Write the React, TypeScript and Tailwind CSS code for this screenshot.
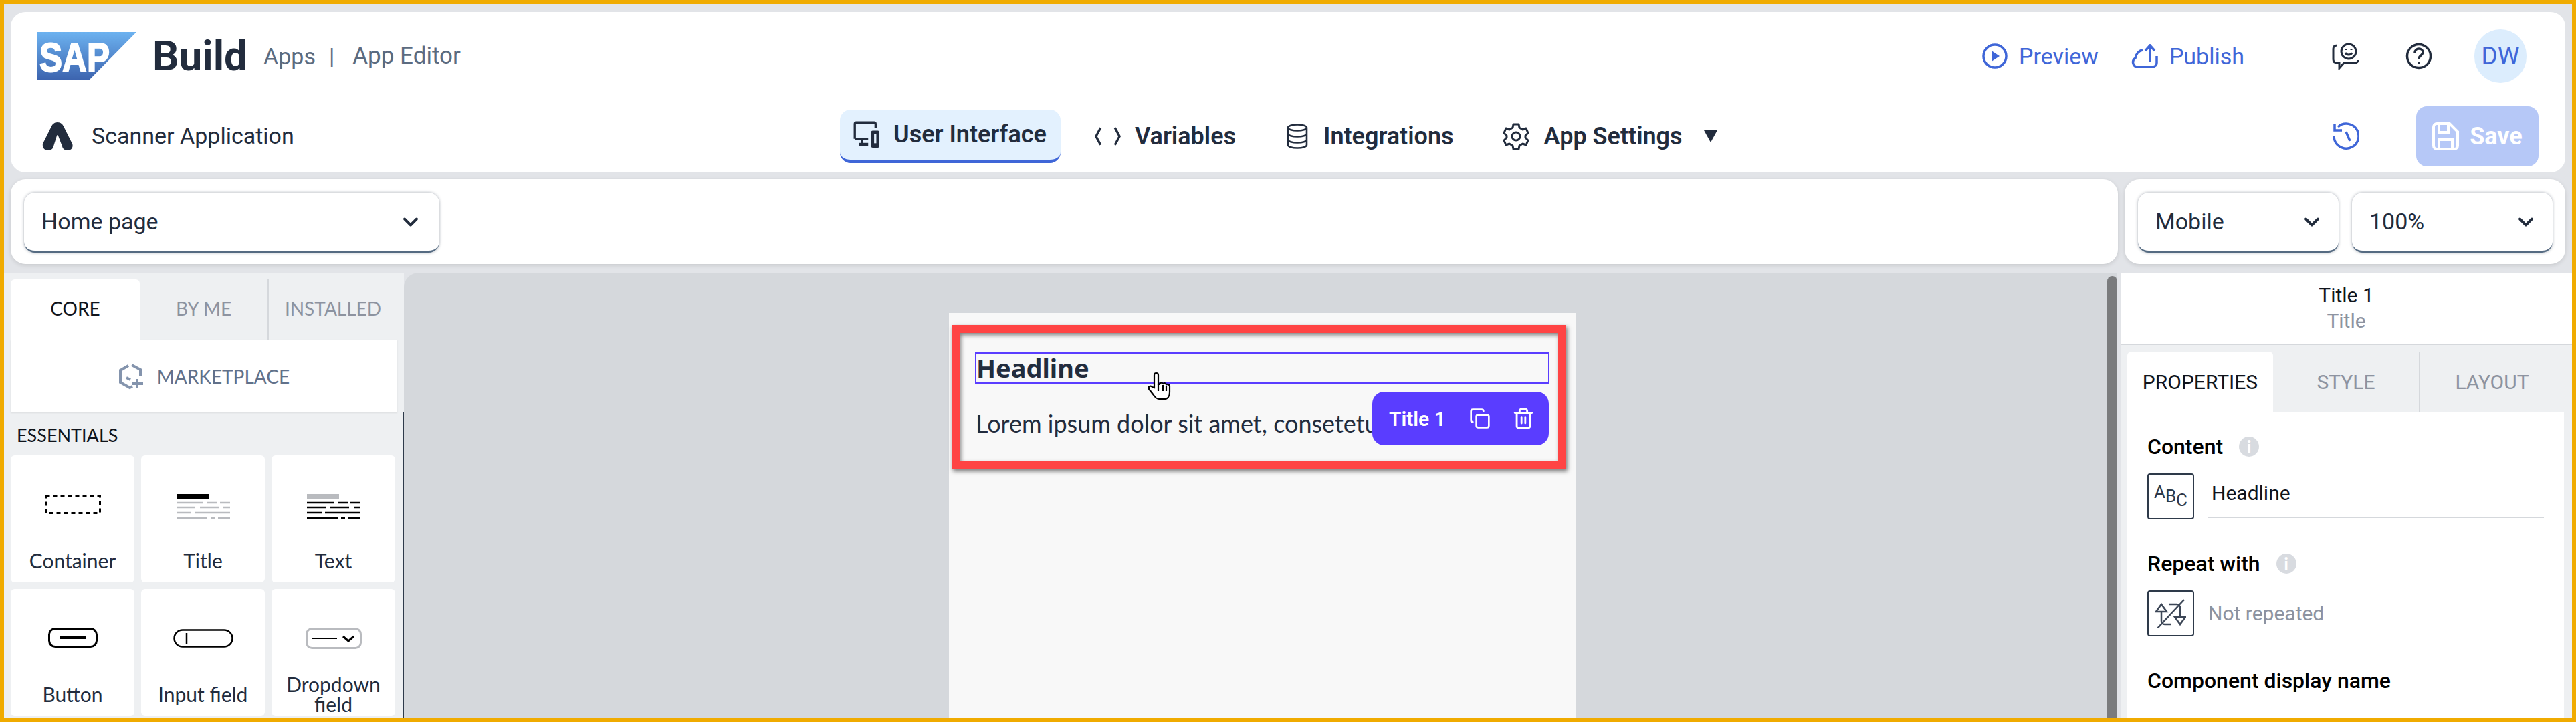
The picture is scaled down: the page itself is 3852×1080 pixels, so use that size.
import { ChevronDown, Copy, Trash2 } from "lucide-react";

const plex = "font-['Roboto',sans-serif]";
const brand = "font-['Lato',sans-serif]";

const SapLogo = () => (
  <svg width="148" height="72" viewBox="0 0 148 72">
    <defs>
      <linearGradient id="sapfill" x1="0" y1="0" x2="0" y2="1">
        <stop offset="0" stopColor="#6cb2f0" />
        <stop offset="1" stopColor="#3c63ae" />
      </linearGradient>
    </defs>
    <polygon points="0,0 148,0 77,72 0,72" fill="url(#sapfill)" />
    <text x="3" y="59" fill="#fff" stroke="#fff" strokeWidth="2" fontFamily="Liberation Sans" fontWeight="700" fontSize="61" textLength="105" lengthAdjust="spacingAndGlyphs">
      SAP
    </text>
  </svg>
);

const AppLogo = () => (
  <svg width="48" height="42" viewBox="0 0 48 42" fill="#222c3d">
    <path d="M24 0c5 0 8 3 10 8l12 24c2 5-1 10-7 10-4 0-7-2-8-6l-6-16c-.5-1.500-1.500-1.500-2 0l-5 16c-1 4-4 6-8 6-6 0-9-5-8-10L14 8c2-5 5-8 10-8z" />
  </svg>
);

const Select = ({ label, className }: { label: string; className: string }) => (
  <div className={`${className} h-[90px] flex items-center justify-between bg-white rounded-[16px] border-b-[3px] border-b-[#556b82] shadow-[0_0_4px_rgba(60,70,90,0.45)]`}>
    <span className={`${plex} text-[34px] text-[#222c3d]`}>{label}</span>
    <ChevronDown size={36} strokeWidth={2.6} className="text-[#222c3d]" />
  </div>
);

const NavIcon = ({ kind }: { kind: string }) => {
  if (kind === "ui")
    return (
      <svg width="40" height="40" viewBox="0 0 36 36" fill="none" stroke="#222c3d" strokeWidth="3">
        <path d="M2 24V4a2 2 0 0 1 2-2h24a2 2 0 0 1 2 2v6" />
        <path d="M2 24h18M12 25v6" />
        <path d="M8 31.500h12" strokeWidth="4" />
        <rect x="24" y="13" width="11" height="23" rx="2" fill="#222c3d" stroke="none" />
        <rect x="28" y="18" width="3" height="12" fill="#e3f1fe" stroke="none" />
      </svg>
    );
  if (kind === "code")
    return (
      <svg width="41" height="30" viewBox="0 0 42 30" fill="none" stroke="#222c3d" strokeWidth="3.500">
        <path d="M10 2 3 15l7 13M32 2l7 13-7 13" />
      </svg>
    );
  if (kind === "db")
    return (
      <svg width="32" height="38" viewBox="0 0 32 38" fill="none" stroke="#222c3d" strokeWidth="2.600">
        <ellipse cx="16" cy="6" rx="14" ry="4.500" />
        <path d="M2 6v26c0 2.500 6 4.500 14 4.500S30 34.500 30 32V6" />
        <path d="M2 15c0 2.500 6 4.500 14 4.500S30 17.500 30 15M2 24c0 2.500 6 4.500 14 4.500S30 26.500 30 24" />
      </svg>
    );
  return (
    <svg width="38" height="40" viewBox="0 0 38 40" fill="none" stroke="#222c3d" strokeWidth="3">
      <path d="M15 2h8l1 5 5 3 5-2 3 7-4 4v3l4 4-3 7-5-2-5 3-1 5h-8l-1-5-5-3-5 2-3-7 4-4v-3l-4-4 3-7 5 2 5-3z" strokeLinejoin="round" />
      <circle cx="19" cy="20" r="6" />
    </svg>
  );
};

const navText = `${plex} text-[36px] font-semibold text-[#222c3d] whitespace-nowrap`;

const Tile = ({ label, children }: { label: string; children: React.ReactNode }) => (
  <div className="h-[190px] bg-white rounded-[6px] flex flex-col items-center relative pt-[58px]">
    {children}
    <div className={`${brand} absolute bottom-[3px] left-0 right-0 h-[60px] flex items-center justify-center text-center text-[30px] leading-[30px] text-[#222c3d] px-[20px]`}>{label}</div>
  </div>
);

const TitleLines = ({ head, body }: { head: string; body: string }) => (
  <svg width="80" height="38" viewBox="0 0 80 38" fill="none" stroke={body} strokeWidth="2.500">
    <rect x="0" y="0" width="48" height="8" fill={head} stroke="none" />
    <path d="M0 13h40M46 13h15M65 13h15M0 20h28M35 20h28M70 20h10M0 28h22M27 28h53M0 36h46M51 36h6M62 36h18" />
  </svg>
);

const InfoDot = () => (
  <span className={`${brand} w-[30px] h-[30px] rounded-full bg-[#d8dbe0] text-white text-[24px] font-black flex items-center justify-center`}>i</span>
);

export default function App() {
  return (
    <div className="w-[3852px] h-[1080px] border-[6px] border-[#f0ab00] bg-[#e2e4e8] flex flex-col overflow-hidden">
      <div className="mx-[10px] mt-[12px] h-[240px] bg-white rounded-[22px] flex flex-col">
        <div className="h-[116px] flex items-center justify-between">
          <div className="flex items-center pl-[40px] pt-[16px]">
            <SapLogo />
            <span className={`${plex} ml-[24px] text-[62px] font-bold text-[#222c3d] leading-none`}>Build</span>
            <span className={`${plex} ml-[24px] text-[34px] text-[#5b6b80]`}>Apps</span>
            <span className={`${plex} ml-[20px] text-[34px] text-[#5b6b80]`}>|</span>
            <span className={`${plex} ml-[27px] text-[35px] text-[#5b6b80]`}>App Editor</span>
          </div>
          <div className="flex items-center pt-[16px] pr-[58px]">
            <svg width="38" height="40" viewBox="0 0 38 40" fill="none" stroke="#3f66d8" strokeWidth="3.500">
              <circle cx="19" cy="20" r="17" />
              <path d="M14 12l12 8-12 8z" fill="#3f66d8" stroke="none" />
            </svg>
            <span className={`${plex} ml-[17px] text-[34px] text-[#3f66d8]`}>Preview</span>
            <svg className="ml-[49px]" width="40" height="36" viewBox="0 0 40 36" fill="none" stroke="#3f66d8" strokeWidth="3.500">
              <path d="M16 34H9a7 7 0 0 1-3-13c1-6 5-11 11-12M24 34h7c5 0 7-3 7-6V18M28 26V3M21 10l7-8 7 8" />
              <path d="M9 34h22" />
            </svg>
            <span className={`${plex} ml-[17px] text-[34px] text-[#3f66d8]`}>Publish</span>
            <svg className="ml-[131px]" width="40" height="40" viewBox="0 0 40 40" fill="none" stroke="#222c3d" strokeWidth="3">
              <path d="M8 4C4 4 2 6 2 9v16c0 3 2 5 6 5h3v8l7-8h16c3 0 5-2 5-4" />
              <circle cx="25" cy="13" r="11" />
              <path d="M20 15c2 4 8 4 10 0" />
              <path d="M21 9v2M29 9v2" />
            </svg>
            <svg className="ml-[70px]" width="40" height="40" viewBox="0 0 40 40" fill="none" stroke="#222c3d" strokeWidth="3.500">
              <circle cx="20" cy="20" r="17.500" />
              <path d="M14 15c0-4 3-6 6-6s6 2 6 5c0 5-6 5-6 10" />
              <path d="M20 28v3" />
            </svg>
            <div className={`${plex} ml-[63px] w-[78px] h-[80px] rounded-full bg-[#dcedfd] text-[#3f66d8] text-[37px] flex items-center justify-center`}>DW</div>
          </div>
        </div>

        <div className="flex-1 flex items-center pt-[15px]">
          <div className="w-[1240px] flex items-center pl-[46px]">
            <AppLogo />
            <span className={`${plex} ml-[27px] text-[34px] text-[#222c3d]`}>Scanner Application</span>
          </div>
          <div className="flex items-center">
            <div className="w-[330px] h-[80px] rounded-[16px] bg-[#e3f1fe] border-b-[5px] border-b-[#3f66d8] flex items-center pl-[20px] gap-[20px]">
              <NavIcon kind="ui" />
              <span className={navText}>User Interface</span>
            </div>
            <div className="ml-[50px]"><NavIcon kind="code" /></div>
            <span className={`${navText} ml-[20px]`}>Variables</span>
            <div className="ml-[76px]"><NavIcon kind="db" /></div>
            <span className={`${navText} ml-[23px]`}>Integrations</span>
            <div className="ml-[74px]"><NavIcon kind="gear" /></div>
            <span className={`${navText} ml-[23px]`}>App Settings</span>
            <svg className="ml-[31px]" width="22" height="20" viewBox="0 0 22 20" fill="#222c3d">
              <path d="M1 1h20L11 19z" />
            </svg>
          </div>
          <div className="ml-auto flex items-center pr-[40px]">
            <svg width="40" height="42" viewBox="0 0 40 42" fill="none" stroke="#3f66d8" strokeWidth="3.500">
              <path d="M8 7a18.500 18.500 0 1 1-6 14" />
              <path d="M3 2v10h11M20 14l6 14" />
            </svg>
            <div className="ml-[85px] w-[183px] h-[90px] rounded-[16px] bg-[#b6c8f7] flex items-center justify-center gap-[16px]">
              <svg width="40" height="42" viewBox="0 0 40 42" fill="none" stroke="#fff" strokeWidth="4">
                <path d="M2 7a5 5 0 0 1 5-5h19l12 12v21a5 5 0 0 1-5 5H7a5 5 0 0 1-5-5z" />
                <path d="M10 2v13h14V2M10 40V26h20v14" />
              </svg>
              <span className={`${plex} text-[36px] font-bold text-white`}>Save</span>
            </div>
          </div>
        </div>
      </div>

      <div className="mx-[10px] mt-[10px] h-[127px] flex gap-[10px]">
        <div className="flex-1 bg-white rounded-[22px] shadow-[0_2px_6px_rgba(0,0,0,0.12)] pl-[20px] pt-[20px]">
          <Select label="Home page" className="w-[621px] pl-[26px] pr-[25px]" />
        </div>
        <div className="w-[659px] bg-white rounded-[22px] shadow-[0_2px_6px_rgba(0,0,0,0.12)] pl-[20px] pt-[20px] flex gap-[20px]">
          <Select label="Mobile" className="w-[300px] pl-[26px] pr-[22px]" />
          <Select label="100%" className="w-[300px] pl-[26px] pr-[22px]" />
        </div>
      </div>

      <div className="mt-[13px] flex-1 flex min-h-0">
        <div className="w-[598px] bg-[#eef0f2] flex flex-col">
          <div className="pl-[10px] pt-[10px]">
            <div className={`${brand} flex h-[90px] text-[28px] w-[578px]`}>
              <div className="w-[193px] bg-white rounded-t-[6px] flex items-center justify-center text-[#10141c] pb-[4px]">CORE</div>
              <div className="w-[193px] flex items-center justify-center text-[#8d93a0] border-r-2 border-r-[#d5d8dc] pb-[4px]">BY ME</div>
              <div className="flex-1 flex items-center justify-center text-[#8d93a0] pb-[4px]">INSTALLED</div>
            </div>
            <div className="w-[578px] h-[109px] bg-white flex items-center justify-center gap-[20px] shadow-[0_1px_2px_rgba(0,0,0,0.08)]">
              <svg width="38" height="40" viewBox="0 0 38 40" fill="none" stroke="#8494ad" strokeWidth="4">
                <path d="M15 4 3 11v18l14 8 4-2" />
                <path d="M20 3l13 7v9" />
                <path d="M12 22l6 3" />
                <path d="M28 24v14M21 31h16" />
              </svg>
              <span className={`${brand} text-[28px] text-[#61718a]`}>MARKETPLACE</span>
            </div>
          </div>
          <div className="flex-1 pl-[10px] border-r-2 border-r-[#2e3a4a]">
            <div className={`${brand} h-[64px] flex items-center pl-[9px] pt-[4px] text-[27px] text-[#10141c]`}>ESSENTIALS</div>
            <div className="grid grid-cols-[185px_185px_185px] gap-[10px]">
              <Tile label="Container">
                <svg width="84" height="28" viewBox="0 0 84 28" fill="none" stroke="#000" strokeWidth="3" strokeDasharray="6 5" className="mt-[2px]">
                  <rect x="1.500" y="1.500" width="81" height="25" />
                </svg>
              </Tile>
              <Tile label="Title">
                <TitleLines head="#000" body="#b9bbbf" />
              </Tile>
              <Tile label="Text">
                <TitleLines head="#b9bbbf" body="#000" />
              </Tile>
              <Tile label="Button">
                <svg width="74" height="30" viewBox="0 0 74 30" fill="none" stroke="#000" strokeWidth="3">
                  <rect x="1.500" y="1.500" width="71" height="27" rx="9" />
                  <path d="M18 15h38" strokeWidth="4" />
                </svg>
              </Tile>
              <Tile label="Input field">
                <svg width="90" height="28" viewBox="0 0 90 28" fill="none" stroke="#000" strokeWidth="2.500" className="mt-[2px]">
                  <rect x="1.500" y="1.500" width="87" height="25" rx="12.500" />
                  <path d="M20 6v16" />
                </svg>
              </Tile>
              <Tile label="Dropdown field">
                <svg width="84" height="32" viewBox="0 0 84 32" fill="none" stroke="#000" strokeWidth="2">
                  <rect x="1.500" y="1.500" width="81" height="29" rx="8" stroke="#b9bbbf" strokeWidth="3" />
                  <path d="M10 16h37" />
                  <path d="M56 13l8 7 8-7" strokeWidth="3" />
                </svg>
              </Tile>
            </div>
          </div>
        </div>

        <div className="flex-1 relative bg-[#d5d8dc] rounded-tl-[22px] overflow-hidden">
          <div className="ml-[815px] mt-[60px] w-[937px] h-[700px] bg-[#f8f8f8] relative">
            <div className="absolute left-[39px] top-[59px] w-[859px] h-[47px] border-2 border-[#5a3dff] flex items-center">
              <span className="font-['Noto_Sans',sans-serif] text-[38px] font-bold text-[#222c3d]">Headline</span>
            </div>
            <div className={`${brand} absolute left-[40px] top-[138px] w-[860px] text-[36px] text-[#222c3d] whitespace-nowrap overflow-hidden`}>Lorem ipsum dolor sit amet, consetetur</div>
            <div className="absolute left-[4px] top-[18px] w-[919px] h-[216px] border-[12px] border-[#ff4444] shadow-[2px_3px_6px_rgba(0,0,0,0.5),inset_2px_3px_6px_rgba(0,0,0,0.5)]" />
            <div className="absolute left-[633px] top-[118px] w-[264px] h-[80px] rounded-[18px] bg-[#5a3dff] flex items-center pl-[25px] text-white">
              <span className={`${plex} text-[30px] font-semibold`}>Title 1</span>
              <Copy size={32} strokeWidth={2} className="ml-[35px]" />
              <Trash2 size={34} strokeWidth={2} className="ml-[32px]" />
            </div>
            <svg className="absolute left-[296px] top-[88px]" width="36" height="44" viewBox="0 0 36 44" fill="#fff" stroke="#000" strokeWidth="2.200">
              <path d="M11 24V5c0-4 6-4 6 0v14l2 0c0-3 5-3 5 0 1-3 5-2 5 1 1-2 5-1 5 2v9c0 6-3 10-8 10H18c-4 0-6-3-8-6L3 26c-2-3 2-6 5-3z" />
              <path d="M17 19v10M24 20v9M29 21v8" />
            </svg>
          </div>
          <div className="absolute right-0 top-[5px] bottom-0 w-[15px] bg-[#7a7b7d] rounded-t-full" />
        </div>
        <div className="w-[5px] bg-[#e2e4e8]" />

        <div className="w-[675px] bg-white flex flex-col">
          <div className={`${plex} h-[108px] border-b-2 border-b-[#d5d8dc] flex flex-col items-center justify-center text-[30px] leading-[38px]`}>
            <span className="text-[#10141c]">Title 1</span>
            <span className="text-[#8d93a0]">Title</span>
          </div>
          <div className="flex-1 bg-[#eef0f2] pl-[10px] pr-[12px] pt-[10px] flex flex-col">
            <div className={`${plex} flex h-[90px] text-[30px]`}>
              <div className="w-[218px] bg-white rounded-t-[6px] flex items-center justify-center text-[#10141c]">PROPERTIES</div>
              <div className="w-[220px] flex items-center justify-center text-[#8d93a0] border-r-2 border-r-[#d5d8dc]">STYLE</div>
              <div className="flex-1 flex items-center justify-center text-[#8d93a0]">LAYOUT</div>
            </div>
            <div className={`${plex} flex-1 bg-white pl-[30px] pr-[30px] pt-[32px]`}>
              <div className="flex items-center gap-[24px] h-[40px]">
                <span className="text-[32px] font-medium text-[#000]">Content</span>
                <InfoDot />
              </div>
              <div className="flex mt-[20px] gap-[20px]">
                <div className="w-[70px] h-[69px] border-2 border-[#2e3a4a] rounded-[4px] flex items-center justify-center text-[26px] text-[#2e3a4a]">
                  <span className="-translate-y-[6px]">A</span><span>B</span><span className="translate-y-[6px]">C</span>
                </div>
                <div className="flex-1 h-[67px] border-b-2 border-b-[#d5d8dc] pl-[6px] text-[30px] text-[#10141c] flex items-center pb-[7px]">Headline</div>
              </div>
              <div className="flex items-center gap-[24px] h-[40px] mt-[46px]">
                <span className="text-[32px] font-medium text-[#000]">Repeat with</span>
                <InfoDot />
              </div>
              <div className="flex mt-[20px] gap-[21px]">
                <div className="w-[70px] h-[69px] border-2 border-[#2e3a4a] rounded-[4px] flex items-center justify-center">
                  <svg width="46" height="44" viewBox="0 0 46 44" fill="none" stroke="#3d4757" strokeWidth="2.500">
                    <path d="M1 19 9 8l8 11zM9 19v14c0 3 2 5 5 5h10" />
                    <path d="M45 27l-8 11-8-11zM37 27V13c0-3-2-5-5-5H20" />
                    <path d="M3 44 43 1" />
                  </svg>
                </div>
                <span className="text-[30px] text-[#8d93a0] pt-[12px]">Not repeated</span>
              </div>
              <div className="text-[32px] font-medium text-[#000] mt-[42px]">Component display name</div>
            </div>
          </div>
        </div>
      </div>
    </div>
  );
}
